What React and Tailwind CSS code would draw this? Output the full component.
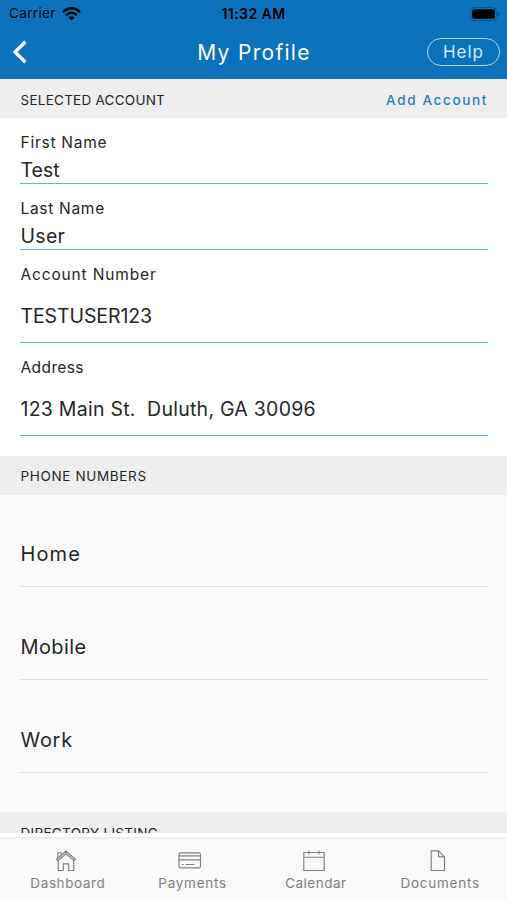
import { clsx } from 'clsx';

const fields = [
  { label: 'First Name', value: 'Test', height: 'h-[66px]', gap: 'pt-[9px]', labelFit: 'tracking-[0.75px]', fit: 'tracking-[0px]' },
  { label: 'Last Name', value: 'User', height: 'h-[66px]', gap: 'pt-[9px]', labelFit: 'tracking-[0.7px]', fit: 'tracking-[0.3px]' },
  { label: 'Account Number', value: 'TESTUSER123', height: 'h-[93px]', gap: 'pt-[23px]', labelFit: 'tracking-[0.85px]', fit: '-tracking-[0.1px]' },
  { label: 'Address', value: '123 Main St.  Duluth, GA 30096', height: 'h-[93px]', gap: 'pt-[23px]', labelFit: 'tracking-[0.4px]', fit: 'tracking-[0.25px]' },
];

const phones = [
  { name: 'Home', fit: 'tracking-[1.1px]' },
  { name: 'Mobile', fit: 'tracking-[0.4px]' },
  { name: 'Work', fit: 'tracking-[0.7px]' },
];

const HomeIcon = () => (
  <svg width="22" height="22" viewBox="0 0 22 22" fill="none" stroke="currentColor" strokeWidth="1.15" strokeLinejoin="round">
    <path d="M1.5 9.3 11 1.3l9.5 8-1.2 1.4L11 3.8l-8.3 6.9z" />
    <path d="M3.3 10.2v10.3h5v-6.7h5.4v6.7h5V10.2M2.8 8.1V2.7h3.4v2.6" />
  </svg>
);

const CardIcon = () => (
  <svg width="24" height="22" viewBox="0 0 24 22" fill="none" stroke="currentColor" strokeWidth="1.15">
    <rect x="1" y="2.8" width="21.5" height="15" rx="1.5" />
    <path d="M1 5.9h21.5M1 9.9h21.5" />
    <path d="M4 14.5h1.5M7.5 14.5h9" />
  </svg>
);

const CalendarIcon = () => (
  <svg width="22" height="22" viewBox="0 0 22 22" fill="none" stroke="currentColor" strokeWidth="1.15">
    <path d="M.8 2.5h20.4v18H.8zM.8 7.2h20.4M6 .5v4M16 .5v4" />
  </svg>
);

const DocumentIcon = () => (
  <svg width="16" height="22" viewBox="0 0 16 22" fill="none" stroke="currentColor" strokeWidth="1.15">
    <path d="M1.2 .8h7.3l6 6v13.7H1.2zM8.5 .8v6h6" />
  </svg>
);

const tabs = [
  { name: 'Dashboard', Icon: HomeIcon, fit: 'tracking-[0.6px]', place: 'pl-[9px]', nudge: '-ml-[3px]' },
  { name: 'Payments', Icon: CardIcon, fit: 'tracking-[0.75px]', place: 'pl-[5px]', nudge: '-ml-[5px]' },
  { name: 'Calendar', Icon: CalendarIcon, fit: 'tracking-[0.5px]', place: 'pr-[2px]', nudge: '-ml-[3px]' },
  { name: 'Documents', Icon: DocumentIcon, fit: 'tracking-[0.75px]', place: 'pr-[7px]', nudge: '-ml-[4px]' },
];

const StatusBar = () => (
  <div className="h-[27px] grid grid-cols-[1fr_auto_1fr] items-center px-[9px] text-black">
    <div className="flex items-center gap-[6px]">
      <span className="text-[13.5px] tracking-[0.35px]">Carrier</span>
      <svg width="19" height="14" viewBox="0 0 19 14" fill="none" stroke="currentColor" strokeWidth="2.4">
        <path d="M1 5.3C6-.1 13-.1 18 5.3M4.1 8.2c3-3.2 7.8-3.2 10.8 0" />
        <path d="M9.5 13.5 6.4 10.5c1.8-1.8 4.4-1.8 6.2 0z" fill="currentColor" stroke="none" />
      </svg>
    </div>
    <span className="text-[14px] font-semibold tracking-[0.45px]">11:32 AM</span>
    <svg className="justify-self-end -mr-[3px]" width="31" height="14" viewBox="0 0 31 14">
      <rect x=".5" y=".5" width="26" height="13" rx="4" fill="none" stroke="#07568f" />
      <rect x="2" y="2.2" width="23" height="9.6" rx="2.5" fill="currentColor" />
      <path d="M28 5v4c2-.8 2-3.2 0-4z" fill="#07406b" />
    </svg>
  </div>
);

const App = () => (
  <div className="w-full h-[900px] flex flex-col overflow-hidden bg-white text-[#262626] font-['Inter',sans-serif]">
    <header className="h-[79px] shrink-0 bg-[#0d72bc]">
      <StatusBar />
      <div className="h-[50px] grid grid-cols-[1fr_auto_1fr] items-center pl-[12px] pr-[7px] text-white">
        <button aria-label="Back">
          <svg width="16" height="24" viewBox="0 0 16 24" fill="none" stroke="currentColor" strokeWidth="3.4">
            <path d="M13.3 1.8 3.1 12l10.2 10.2" />
          </svg>
        </button>
        <h1 className="text-[21px] leading-none tracking-[1.3px] pr-[4px]">My Profile</h1>
        <button className="justify-self-end w-[73px] h-[28px] rounded-full border-[1.5px] border-[#b5dcf5] text-[#d4ecfb] text-[17px] leading-none tracking-[1px]">Help</button>
      </div>
    </header>

    <main className="h-[754px] shrink-0 overflow-hidden">
      <div className="h-[39px] bg-[#eeeeee] flex items-center justify-between pl-[20.5px] pr-[19px] pt-[4px]">
        <h2 className="text-[13.5px] tracking-[0.25px]">SELECTED ACCOUNT</h2>
        <button className="text-[13.5px] font-medium tracking-[1.65px] text-[#2a7cc0]">Add Account</button>
      </div>
      <section className="h-[338px] pl-[20px] pr-[19px]">
        {fields.map((f) => (
          <div key={f.label} className={clsx(f.height, 'pl-[0.5px] border-b border-[#5fb4e2]')}>
            <div className={clsx('pt-[16px] text-[15.5px] leading-[18px]', f.labelFit)}>{f.label}</div>
            <div className={clsx('text-[19.5px] leading-[18px] whitespace-pre', f.gap, f.fit)}>{f.value}</div>
          </div>
        ))}
      </section>
      <div className="h-[39px] bg-[#eeeeee] flex items-center px-[20.5px] pt-[2px]">
        <h2 className="text-[13.5px] tracking-[0.65px]">PHONE NUMBERS</h2>
      </div>
      <section className="h-[317px] bg-[#f9f9f9] pl-[20px] pr-[19px]">
        {phones.map((p, i) => (
          <div key={p.name} className={clsx(i === 0 ? 'h-[92px] pt-[49px]' : 'h-[93px] pt-[50px]', 'pl-[0.5px] border-b border-[#dfdfdf] text-[20px] leading-[20px]', p.fit)}>{p.name}</div>
        ))}
      </section>
      <div className="h-[39px] bg-[#eeeeee] flex items-center px-[20.5px] pt-[4px]">
        <h2 className="text-[13.5px] tracking-[0.3px]">DIRECTORY LISTING</h2>
      </div>
    </main>

    <nav className="mt-[4px] h-[63px] grid grid-cols-4 bg-[#f8f8f8] border-t-2 border-[#eeeeee] text-[#808080]">
      {tabs.map(({ name, Icon, fit, place, nudge }) => (
        <button key={name} className={clsx('flex flex-col items-center pt-[11px]', place)}>
          <span className={nudge}><Icon /></span>
          <span className={clsx('mt-[3px] text-[13.5px] leading-[16px] whitespace-nowrap', fit)}>{name}</span>
        </button>
      ))}
    </nav>
  </div>
);

export default App;
